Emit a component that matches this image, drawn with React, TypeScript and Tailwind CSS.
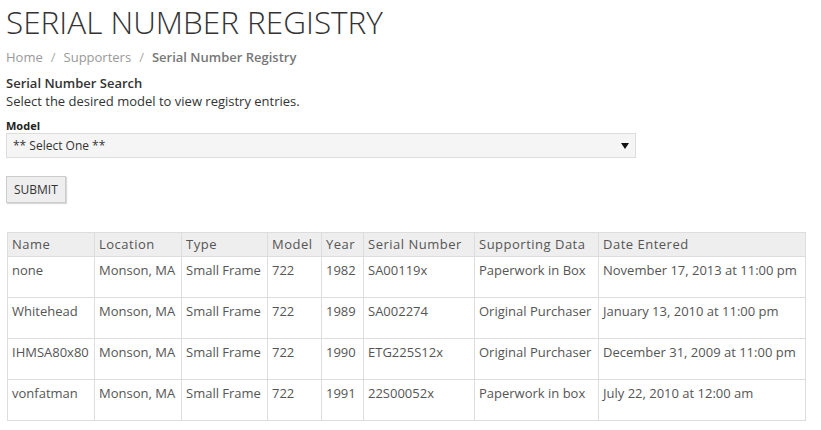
import React from "react";

const rows = [
  ["none", "Monson, MA", "Small Frame", "722", "1982", "SA00119x", "Paperwork in Box", "November 17, 2013 at 11:00 pm"],
  ["Whitehead", "Monson, MA", "Small Frame", "722", "1989", "SA002274", "Original Purchaser", "January 13, 2010 at 11:00 pm"],
  ["IHMSA80x80", "Monson, MA", "Small Frame", "722", "1990", "ETG225S12x", "Original Purchaser", "December 31, 2009 at 11:00 pm"],
  ["vonfatman", "Monson, MA", "Small Frame", "722", "1991", "22S00052x", "Paperwork in box", "July 22, 2010 at 12:00 am"],
];

const headers = ["Name", "Location", "Type", "Model", "Year", "Serial Number", "Supporting Data", "Date Entered"];
const widths = ["w-[87px]", "w-[87px]", "w-[86px]", "w-[54px]", "w-[42px]", "w-[111px]", "w-[124px]", "w-[207px]"];

export default function App() {
  return (
    <div className="w-[821px] h-[430px] bg-white overflow-hidden font-['Open_Sans',sans-serif] text-[#333]">
      <div className="pl-[6px] pt-[2px]">
        <h1 className="text-[31.5px] font-light leading-[40px] text-[#333]">SERIAL NUMBER REGISTRY</h1>
        <div className="mt-[6px] text-[13px] leading-[18px] flex items-center">
          <span className="text-[#999]">Home</span>
          <span className="text-[#aaa] px-[8px]">/</span>
          <span className="text-[#999]">Supporters</span>
          <span className="text-[#aaa] px-[8px]">/</span>
          <span className="text-[#777] font-semibold">Serial Number Registry</span>
        </div>
        <div className="mt-[8px] text-[13px] font-semibold leading-[18px]">Serial Number Search</div>
        <div className="text-[13px] leading-[18px]">Select the desired model to view registry entries.</div>
        <div className="mt-[9px] text-[11px] font-bold leading-[14px] text-[#222]">Model</div>
        <div className="w-[630px] h-[25px] bg-[#f5f5f5] border border-[#ddd] flex items-center justify-between pl-[6px] pr-[6px] text-[12px] text-[#333]">
          <span>** Select One **</span>
          <svg width="8" height="8" viewBox="0 0 8 8"><path d="M0 1 H8 L4 7 Z" fill="#111" /></svg>
        </div>
        <button className="block mt-[18px] h-[27px] px-[7px] bg-[#eee] border border-[#ccc] shadow-[1px_1px_1px_rgba(0,0,0,0.15)] text-[12px] text-[#333] leading-none">SUBMIT</button>
      </div>
      <table className="ml-[7px] mt-[29px] border-collapse table-fixed text-[13px] text-[#555]">
        <thead>
          <tr className="bg-[#eee] h-[24px]">
            {headers.map((h, i) => (
              <th key={h} className={`${widths[i]} border border-[#ddd] px-[4px] text-left font-normal tracking-[0.5px] text-[#555] whitespace-nowrap`}>{h}</th>
            ))}
          </tr>
        </thead>
        <tbody>
          {rows.map((r) => (
            <tr key={r[0]} className="h-[41px]">
              {r.map((c, i) => (
                <td key={i} className={`${widths[i]} border border-[#ddd] px-[4px] pt-[4px] align-top whitespace-nowrap`}>{c}</td>
              ))}
            </tr>
          ))}
        </tbody>
      </table>
    </div>
  );
}
